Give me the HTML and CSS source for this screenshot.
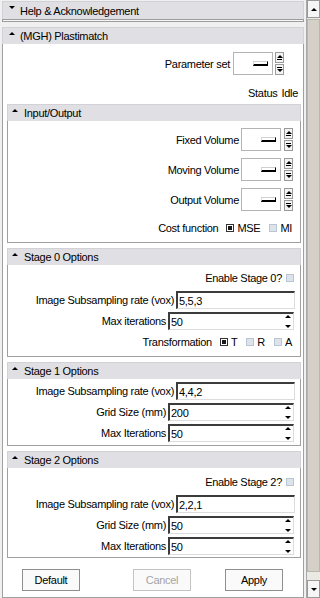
FILE: index.html
```html
<!DOCTYPE html>
<html lang="en">
<head>
    <meta charset="UTF-8">
    <meta name="viewport" content="width=device-width, initial-scale=1.0">
    <title>Plastimatch</title>
    <link rel="stylesheet" href="styles.css">
</head>
<body>
    <div class="window">
        <div class="panel">
            <div class="group collapsed">
                <div class="group-header"><span class="arrow down"></span>Help &amp; Acknowledgement</div>
                <div class="group-body"></div>
            </div>

            <div class="group module">
                <div class="group-header"><span class="arrow up"></span>(MGH) Plastimatch</div>
                <div class="group-body">
                    <div class="row param-row">
                        <span>Parameter set</span>
                        <span class="combo"><span class="combo-glyph"></span></span>
                        <span class="step-btns"><span class="step up"></span><span class="step down"></span></span>
                    </div>
                    <div class="row status-row"><span>Status</span><span>Idle</span></div>

                    <div class="section">
                        <div class="section-header"><span class="arrow up"></span>Input/Output</div>
                        <div class="section-body io-body">
                            <div class="row combo-row">
                                <span>Fixed Volume</span>
                                <span class="combo"><span class="combo-glyph"></span></span>
                                <span class="step-btns"><span class="step up"></span><span class="step down"></span></span>
                            </div>
                            <div class="row combo-row">
                                <span>Moving Volume</span>
                                <span class="combo"><span class="combo-glyph"></span></span>
                                <span class="step-btns"><span class="step up"></span><span class="step down"></span></span>
                            </div>
                            <div class="row combo-row">
                                <span>Output Volume</span>
                                <span class="combo"><span class="combo-glyph"></span></span>
                                <span class="step-btns"><span class="step up"></span><span class="step down"></span></span>
                            </div>
                            <div class="row radio-row cost-row">
                                <span class="radio-label">Cost function</span>
                                <span class="check on"></span><span>MSE</span>
                                <span class="check off spaced"></span><span>MI</span>
                            </div>
                        </div>
                    </div>

                    <div class="section">
                        <div class="section-header"><span class="arrow up"></span>Stage 0 Options</div>
                        <div class="section-body stage0">
                            <div class="row field-row enable-row"><span>Enable Stage 0?</span><span class="check off"></span></div>
                            <div class="row field-row"><span>Image Subsampling rate (vox)</span><span class="line-edit">5,5,3</span></div>
                            <div class="row field-row"><span>Max iterations</span><span class="spin-box">50<span class="spin-arrows"></span></span></div>
                            <div class="row field-row radio-row trans-row">
                                <span class="radio-label">Transformation</span>
                                <span class="check on"></span><span>T</span>
                                <span class="check off spaced"></span><span>R</span>
                                <span class="check off spaced"></span><span>A</span>
                            </div>
                        </div>
                    </div>

                    <div class="section">
                        <div class="section-header"><span class="arrow up"></span>Stage 1 Options</div>
                        <div class="section-body stage1">
                            <div class="row field-row"><span>Image Subsampling rate (vox)</span><span class="line-edit">4,4,2</span></div>
                            <div class="row field-row"><span>Grid Size (mm)</span><span class="spin-box">200<span class="spin-arrows"></span></span></div>
                            <div class="row field-row"><span>Max Iterations</span><span class="spin-box">50<span class="spin-arrows"></span></span></div>
                        </div>
                    </div>

                    <div class="section">
                        <div class="section-header"><span class="arrow up"></span>Stage 2 Options</div>
                        <div class="section-body stage2">
                            <div class="row field-row enable-row"><span>Enable Stage 2?</span><span class="check off"></span></div>
                            <div class="row field-row"><span>Image Subsampling rate (vox)</span><span class="line-edit">2,2,1</span></div>
                            <div class="row field-row"><span>Grid Size (mm)</span><span class="spin-box">50<span class="spin-arrows"></span></span></div>
                            <div class="row field-row"><span>Max Iterations</span><span class="spin-box">50<span class="spin-arrows"></span></span></div>
                        </div>
                    </div>

                    <div class="button-row">
                        <span class="button">Default</span>
                        <span class="button disabled">Cancel</span>
                        <span class="button">Apply</span>
                    </div>
                </div>
            </div>
        </div>

        <div class="scrollbar">
            <div class="sb-btn"><span class="arrow up"></span></div>
            <div class="sb-thumb"></div>
            <div class="sb-btn"><span class="arrow down"></span></div>
        </div>
    </div>
</body>
</html>
```

FILE: styles.css
```css
body {
    margin: 0;
    padding: 0;
    background: #f0f0f0;
    font-family: "Liberation Sans", Arial, sans-serif;
    font-size: 11px;
    letter-spacing: -0.3px;
    color: #000;
}
.window {
    display: flex;
    height: 598px;
    overflow: hidden;
}
.panel {
    width: 306px;
    flex-shrink: 0;
    padding: 1px 2px 0 2px;
    box-sizing: border-box;
    display: flex;
    flex-direction: column;
}

/* collapsible group boxes */
.group-header {
    display: flex;
    align-items: center;
    height: 18px;
    padding-left: 6px;
    box-sizing: border-box;
    background: #e0dfe3;
    border: 1px solid #d2d1d6;
    border-bottom: none;
}
.group-header .arrow {
    margin-right: 5px;
    align-self: flex-start;
    margin-top: 4px;
}
.collapsed .group-body {
    height: 1px;
    border: 1px solid #9c9c9c;
    background: #f7f7f7;
}
.module {
    margin-top: 5px;
    flex: 1;
    display: flex;
    flex-direction: column;
}
.module > .group-header {
    height: 17px;
}
.module > .group-body {
    flex: 1;
    background: #fff;
    border: 1px solid #a0a0a0;
    border-top: none;
    padding: 0 2px 0 4px;
}

.arrow {
    display: inline-block;
    width: 0;
    height: 0;
    border-left: 3px solid transparent;
    border-right: 3px solid transparent;
}
.arrow.up {
    border-bottom: 3px solid #000;
}
.arrow.down {
    border-top: 3px solid #000;
}

.row {
    display: flex;
    align-items: center;
    justify-content: flex-end;
}
.param-row {
    margin-top: 8px;
    height: 23px;
    margin-right: 17px;
}
.param-row .combo {
    margin-left: 3px;
}
.param-row .step-btns {
    margin-left: 2px;
}
.status-row {
    margin-top: 11px;
    height: 13px;
    gap: 4px;
    margin-right: 3px;
}

/* inner sections */
.section {
    margin-top: 5px;
}
.section-header {
    display: flex;
    align-items: center;
    height: 17px;
    padding-left: 4px;
    box-sizing: border-box;
    background: #e0dfe3;
    border: 1px solid #d2d1d6;
    border-bottom: none;
}
.section-header .arrow {
    margin-right: 6px;
    align-self: flex-start;
    margin-top: 4px;
}
.section-body {
    border: 1px solid #a0a0a0;
    border-top: none;
    padding-right: 5px;
}
.io-body {
    padding-top: 7px;
    padding-bottom: 8px;
}
.combo-row {
    height: 23px;
    margin-right: 2px;
}
.combo-row + .combo-row {
    margin-top: 7px;
}
.combo-row .combo {
    margin-left: 2px;
}
.combo-row .step-btns {
    margin-left: 3px;
}
.cost-row {
    margin-top: 10px;
    height: 13px;
    margin-right: 3px;
}

.combo {
    width: 40px;
    height: 23px;
    box-sizing: border-box;
    border: 1px solid #b4b4b4;
    background: #fff;
    display: flex;
    align-items: center;
    justify-content: flex-end;
    padding-right: 4px;
}
.combo-glyph {
    width: 13px;
    height: 2px;
    border-top: 1px solid #d0d0d0;
    border-left: 1px solid #d8d8d8;
    border-right: 1px solid #000;
    border-bottom: 2px solid #000;
}
.step-btns {
    display: flex;
    flex-direction: column;
    gap: 1px;
    height: 23px;
}
.step {
    width: 9px;
    height: 11px;
    box-sizing: border-box;
    border: 1px solid #9a9a9a;
    background: #f4f4f4;
    display: flex;
    flex-direction: column;
    align-items: center;
    justify-content: center;
    gap: 1px;
}
.step.up::before,
.step.down::after {
    content: "";
    border-left: 3px solid transparent;
    border-right: 3px solid transparent;
}
.step.up::before {
    border-bottom: 3px solid #000;
}
.step.up::after,
.step.down::before {
    content: "";
    width: 5px;
    height: 1px;
    background: #000;
}
.step.down::after {
    border-top: 3px solid #000;
}

/* check boxes */
.radio-row {
    gap: 3px;
}
.radio-label {
    margin-right: 5px;
}
.check {
    width: 8px;
    height: 8px;
    box-sizing: border-box;
    display: inline-block;
}
.check.on {
    border: 1px solid #333;
    padding: 1px;
    background: #fff;
    background-clip: padding-box;
    box-shadow: inset 0 0 0 1px #fff, inset 0 0 0 4px #1a1a1a;
}
.check.off {
    border: 1px solid #bcc6d2;
    background: #dde3eb;
}
.check.spaced {
    margin-left: 6px;
}

/* stage rows */
.field-row {
    height: 18px;
    gap: 2px;
}
.stage0 {
    padding-top: 4px;
    padding-bottom: 5px;
}
.stage0 .field-row + .field-row {
    margin-top: 3px;
}
.stage0 .enable-row + .field-row {
    margin-top: 4px;
}
.stage0 .trans-row {
    gap: 3px;
    margin-right: 3px;
}
.stage1 {
    padding-top: 3px;
    padding-bottom: 3px;
}
.stage1 .field-row + .field-row,
.stage2 .field-row + .field-row {
    margin-top: 3px;
}
.stage2 {
    padding-top: 5px;
    padding-bottom: 2px;
}
.stage2 .enable-row + .field-row {
    margin-top: 4px;
}
.enable-row {
    gap: 4px;
    margin-right: 1px;
}

.line-edit,
.spin-box {
    height: 18px;
    box-sizing: border-box;
    border-top: 2px solid #3c3c3c;
    border-left: 2px solid #3c3c3c;
    border-right: 1px solid #dcdcdc;
    border-bottom: 1px solid #dcdcdc;
    background: #fff;
    padding-left: 1px;
    display: flex;
    align-items: center;
}
.line-edit {
    width: 119px;
}
.spin-box {
    width: 126px;
    margin-right: 1px;
    position: relative;
}
.spin-arrows {
    position: absolute;
    right: 2px;
    top: 1px;
    width: 6px;
    height: 13px;
    display: flex;
    flex-direction: column;
    align-items: center;
    justify-content: space-between;
}
.spin-arrows::before,
.spin-arrows::after {
    content: "";
    border-left: 3px solid transparent;
    border-right: 3px solid transparent;
}
.spin-arrows::before {
    border-bottom: 3px solid #000;
    box-shadow: 0 3px 0 -2px #000;
}
.spin-arrows::after {
    border-top: 3px solid #000;
}

/* bottom buttons */
.button-row {
    display: flex;
    margin-top: 11px;
    padding-left: 15px;
}
.button {
    width: 58px;
    height: 22px;
    box-sizing: border-box;
    border: 1px solid #8e8e8e;
    background: #fafafa;
    display: flex;
    align-items: center;
    justify-content: center;
}
.button + .button {
    margin-left: 53px;
}
.button.disabled {
    color: #a4a4a4;
    border-color: #c4c4c4;
}
.button.disabled + .button {
    margin-left: 34px;
}

/* scrollbar */
.scrollbar {
    width: 14px;
    display: flex;
    flex-direction: column;
    background: #ebe9e4;
    border-left: 1px solid #a8a8a8;
    box-sizing: border-box;
}
.sb-btn {
    height: 16px;
    background: #f6f6f6;
    border: 1px solid #9a9a9a;
    display: flex;
    align-items: center;
    justify-content: center;
}
.sb-thumb {
    flex: 1;
    margin: 1px 0 8px;
    background: #d4d0c8;
    border: 1px solid #bab6ae;
}
```
